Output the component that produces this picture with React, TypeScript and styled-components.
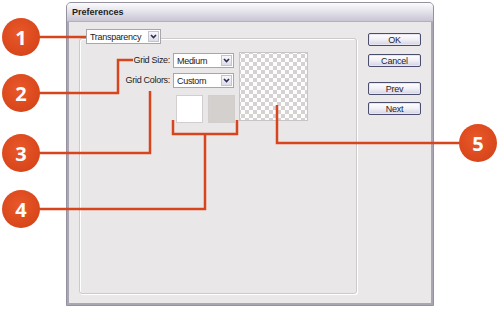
import React from "react";
import styled, { createGlobalStyle } from "styled-components";

const GlobalStyle = createGlobalStyle`
	html, body {
		margin: 0;
		padding: 0;
		background: #fff;
	}
	body {
		font-family: "Liberation Sans", Arial, sans-serif;
	}
`;

const Page = styled.div`
	position: relative;
	width: 500px;
	height: 310px;
	box-sizing: border-box;
	padding: 2px 0 0 66px;
	display: flex;
	align-items: flex-start;
	background: #fff;
	overflow: hidden;
`;

const Window = styled.div`
	width: 368px;
	height: 304px;
	box-sizing: border-box;
	display: flex;
	flex-direction: column;
	border: 1px solid #95919f;
	border-radius: 5px 5px 0 0;
	background: #aaa6b3;
`;

const TitleBar = styled.div`
	height: 19px;
	flex: none;
	display: flex;
	align-items: center;
	padding-left: 5px;
	border-radius: 4px 4px 0 0;
	background: linear-gradient(#fcfcfe, #e8e6ee 40%, #c9c5d3);
	border-bottom: 1px solid #b3afbd;
	box-sizing: border-box;
	font-weight: bold;
	font-size: 9px;
	color: #1d1d24;
`;

const Body = styled.div`
	flex: 1;
	display: flex;
	gap: 11px;
	margin: 0 2px 2px 2px;
	padding: 16px 10px 9px 10px;
	background: #ebe8e9;
	box-sizing: border-box;
`;

const Panel = styled.div`
	width: 278px;
	flex: none;
	display: flex;
	flex-direction: column;
	padding-left: 6px;
	box-sizing: border-box;
	border: 1px solid #cdc9cd;
	border-radius: 3px;
	box-shadow: inset 1px 1px 0 #fff, 1px 1px 0 #fff;
	background: #eae7e8;
`;

const Header = styled.div`
	margin-top: -10px;
	display: flex;
`;

const FormGrid = styled.div`
	margin-top: 8px;
	display: grid;
	grid-template-columns: 84px 61px 69px;
	grid-template-rows: 16px 15px 28px;
	column-gap: 3px;
	row-gap: 5px;
	& > :nth-child(3n) {
		margin-left: 2px;
	}
`;

const Label = styled.div<{ $row: number }>`
	grid-column: 1;
	grid-row: ${(p) => p.$row};
	align-self: end;
	height: 15px;
	line-height: 15px;
	text-align: right;
	font-size: 9px;
	letter-spacing: -0.3px;
	color: #222;
`;

const SelectBox = styled.div<{ $width: number }>`
	width: ${(p) => p.$width}px;
	height: 15px;
	box-sizing: border-box;
	display: flex;
	align-items: center;
	border: 1px solid #a7a6ab;
	background: #fff;
	font-size: 9px;
	letter-spacing: -0.3px;
	color: #222;
`;

const SelectText = styled.span`
	flex: 1;
	padding-left: 3px;
`;

const ArrowBox = styled.span`
	width: 11px;
	height: 11px;
	margin-right: 1px;
	box-sizing: border-box;
	display: flex;
	align-items: center;
	justify-content: center;
	border: 1px solid #c4c3d0;
	background: linear-gradient(#f8f8fa, #dedde6);
`;

const SelectCell = styled.div<{ $row: number }>`
	grid-column: 2;
	grid-row: ${(p) => p.$row};
	align-self: end;
`;

const Swatches = styled.div`
	grid-column: 2 / 4;
	grid-row: 3;
	display: flex;
	gap: 5px;
	padding-left: 1px;
	margin-top: 2px;
`;

const Swatch = styled.div<{ $color: string }>`
	width: 27px;
	height: 28px;
	box-sizing: border-box;
	border: 1px solid #d2cece;
	background: ${(p) => p.$color};
`;

const Preview = styled.div`
	grid-column: 3;
	grid-row: 1 / 4;
	width: 69px;
	height: 69px;
	box-sizing: border-box;
	border: 1px solid #c9c5c5;
	background: repeating-conic-gradient(#d6d2d1 0 25%, #fdfdfd 0 50%) 1px 1px / 8px 8px;
`;

const ButtonColumn = styled.div`
	width: 53px;
	flex: none;
	margin-top: -5px;
	display: flex;
	flex-direction: column;
`;

const Button = styled.div<{ $gap: number }>`
	height: 13px;
	margin-top: ${(p) => p.$gap}px;
	box-sizing: border-box;
	display: flex;
	align-items: center;
	justify-content: center;
	border: 1px solid #4b4d6c;
	border-radius: 2px;
	background: linear-gradient(#ffffff, #f1f0f6 50%, #d4d2e4);
	box-shadow: inset 0 0 0 1px #e7e6f2;
	font-size: 9px;
	letter-spacing: -0.2px;
	color: #1e1e28;
`;

const Callouts = styled.svg`
	position: absolute;
	left: 0;
	top: 0;
	pointer-events: none;
`;

const Badge = styled.div<{ $x: number; $y: number }>`
	position: absolute;
	left: ${(p) => p.$x - 19}px;
	top: ${(p) => p.$y - 19}px;
	width: 38px;
	height: 38px;
	border-radius: 50%;
	display: flex;
	align-items: center;
	justify-content: center;
	background: radial-gradient(circle at 45% 40%, #e9582a, #d8461b 70%, #c93f17);
	color: #fff;
	font-weight: bold;
	font-size: 20px;
	font-family: "Open Sans", "Liberation Sans", sans-serif;
`;

const Chevron = () => (
	<svg width="7" height="5" viewBox="0 0 7 5">
		<path d="M1 1 L3.5 3.6 L6 1" fill="none" stroke="#2a2e58" strokeWidth="1.6" />
	</svg>
);

const Select = ({ value, width }: { value: string; width: number }) => (
	<SelectBox $width={width}>
		<SelectText>{value}</SelectText>
		<ArrowBox>
			<Chevron />
		</ArrowBox>
	</SelectBox>
);

const badges = [
	{ n: 1, x: 21, y: 37 },
	{ n: 2, x: 21, y: 93 },
	{ n: 3, x: 21, y: 153 },
	{ n: 4, x: 21, y: 209 },
	{ n: 5, x: 478, y: 143 },
];

export default function App() {
	return (
		<>
			<GlobalStyle />
			<Page>
				<Window>
					<TitleBar>Preferences</TitleBar>
					<Body>
						<Panel>
							<Header>
								<Select value="Transparency" width={75} />
							</Header>
							<FormGrid>
								<Label $row={1}>Grid Size:</Label>
								<SelectCell $row={1}>
									<Select value="Medium" width={61} />
								</SelectCell>
								<Preview />
								<Label $row={2}>Grid Colors:</Label>
								<SelectCell $row={2}>
									<Select value="Custom" width={61} />
								</SelectCell>
								<Swatches>
									<Swatch $color="#ffffff" />
									<Swatch $color="#d4d0cd" />
								</Swatches>
							</FormGrid>
						</Panel>
						<ButtonColumn>
							<Button $gap={0}>OK</Button>
							<Button $gap={8}>Cancel</Button>
							<Button $gap={15}>Prev</Button>
							<Button $gap={7}>Next</Button>
						</ButtonColumn>
					</Body>
				</Window>
				<Callouts width="500" height="310" viewBox="0 0 500 310">
					<g fill="none" stroke="#d8441c" strokeWidth="2.5">
						<path d="M38 37 H86" />
						<path d="M38 93 H118 V60 H133" />
						<path d="M38 153 H150 V91" />
						<path d="M173 120 V134 H237 V120 M205 134 V209 H38" />
						<path d="M277 105 V143 H460" />
					</g>
				</Callouts>
				{badges.map((b) => (
					<Badge key={b.n} $x={b.x} $y={b.y}>
						{b.n}
					</Badge>
				))}
			</Page>
		</>
	);
}
